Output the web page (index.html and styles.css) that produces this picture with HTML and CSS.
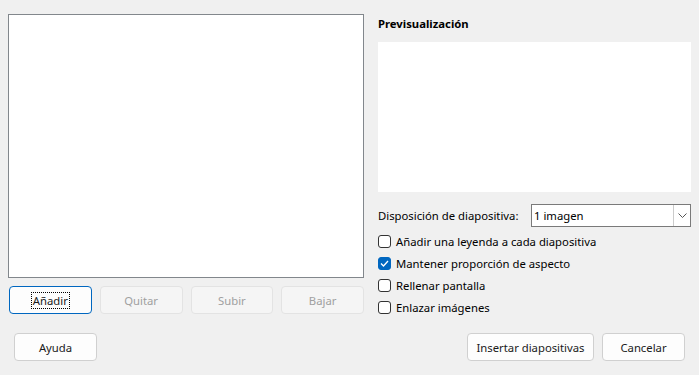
FILE: index.html
```html
<html>
  <head>
    <meta charset="utf-8" />
    <title>Álbum de fotos</title>
    <link rel="stylesheet" href="styles.css">
  </head>
  <body>
    <div class="dialog">
      <div class="main">
        <div class="left">
          <div class="listbox"></div>
          <div class="list-buttons">
            <button class="btn focus"><span>Añadir</span></button>
            <button class="btn" disabled>Quitar</button>
            <button class="btn" disabled>Subir</button>
            <button class="btn" disabled>Bajar</button>
          </div>
        </div>
        <div class="right">
          <div class="title">Previsualización</div>
          <div class="preview"></div>
          <div class="layout-row">
            <label>Disposición de diapositiva:</label>
            <div class="combo">
              <span class="combo-value">1 imagen</span>
              <span class="combo-arrow">
                <svg width="9" height="5" viewBox="0 0 9 5"><path d="M0.5 0.5 L4.5 4.5 L8.5 0.5" fill="none" stroke="#555" stroke-width="1"/></svg>
              </span>
            </div>
          </div>
          <div class="checks">
            <div class="check"><span class="box"></span>Añadir una leyenda a cada diapositiva</div>
            <div class="check"><span class="box checked"><svg width="9" height="7" viewBox="0 0 9 7"><path d="M1 3.5 L3.5 6 L8 1" fill="none" stroke="#fff" stroke-width="1.3"/></svg></span>Mantener proporción de aspecto</div>
            <div class="check"><span class="box"></span>Rellenar pantalla</div>
            <div class="check"><span class="box"></span>Enlazar imágenes</div>
          </div>
        </div>
      </div>
      <div class="footer">
        <button class="btn">Ayuda</button>
        <div class="footer-right">
          <button class="btn wide">Insertar diapositivas</button>
          <button class="btn">Cancelar</button>
        </div>
      </div>
    </div>
  </body>
</html>
```

FILE: styles.css
```css
* {
  margin: 0;
  padding: 0;
  box-sizing: border-box;
}
body {
  background: #f0f0f0;
  font-family: "Noto Sans", "Open Sans", sans-serif;
  font-size: 11.3px;
  color: #000;
}
.dialog {
  width: 699px;
  height: 375px;
}
.main {
  display: flex;
  padding: 14px 0 0 8px;
  gap: 14px;
}
.left {
  width: 356px;
}
.listbox {
  height: 264px;
  background: #fff;
  border: 1px solid #82878c;
}
.list-buttons {
  display: flex;
  gap: 8px;
  margin-top: 8px;
  padding-left: 1px;
}
.btn {
  width: 83px;
  height: 28px;
  background: #fdfdfd;
  border: 1px solid #d0d0d0;
  border-radius: 4px;
  font-family: inherit;
  font-size: 11.3px;
  color: #1a1a1a;
}
.btn:disabled {
  background: #f5f5f5;
  border-color: #e3e3e3;
  color: #a0a0a0;
}
.btn.focus {
  border-color: #0067c0;
}
.btn.focus span {
  outline: 1px dotted #000;
  padding: 0 1px;
}
.right {
  width: 313px;
  padding-top: 2px;
}
.title {
  font-weight: bold;
  line-height: 16px;
  margin-bottom: 10px;
}
.preview {
  height: 150px;
  background: #fff;
}
.layout-row {
  display: flex;
  align-items: center;
  margin-top: 12px;
}
.layout-row label {
  width: 153px;
}
.combo {
  flex: 1;
  height: 23px;
  display: flex;
  background: #fff;
  border: 1px solid #7a7a7a;
}
.combo-value {
  flex: 1;
  padding-left: 2px;
  line-height: 21px;
}
.combo-arrow {
  width: 17px;
  border-left: 1px solid #ccc;
  display: flex;
  align-items: center;
  justify-content: center;
}
.checks {
  margin-top: 3px;
}
.check {
  display: flex;
  align-items: center;
  height: 22px;
}
.box {
  width: 13px;
  height: 13px;
  border: 1px solid #333;
  border-radius: 3px;
  margin-right: 5px;
  background: #fff;
  display: flex;
  align-items: center;
  justify-content: center;
}
.box.checked {
  background: #0067c0;
  border-color: #0067c0;
}
.footer {
  display: flex;
  justify-content: space-between;
  margin-top: 15px;
  padding: 0 14px 0 14px;
}
.footer-right {
  display: flex;
  gap: 8px;
}
.btn.wide {
  width: 127px;
}
```
